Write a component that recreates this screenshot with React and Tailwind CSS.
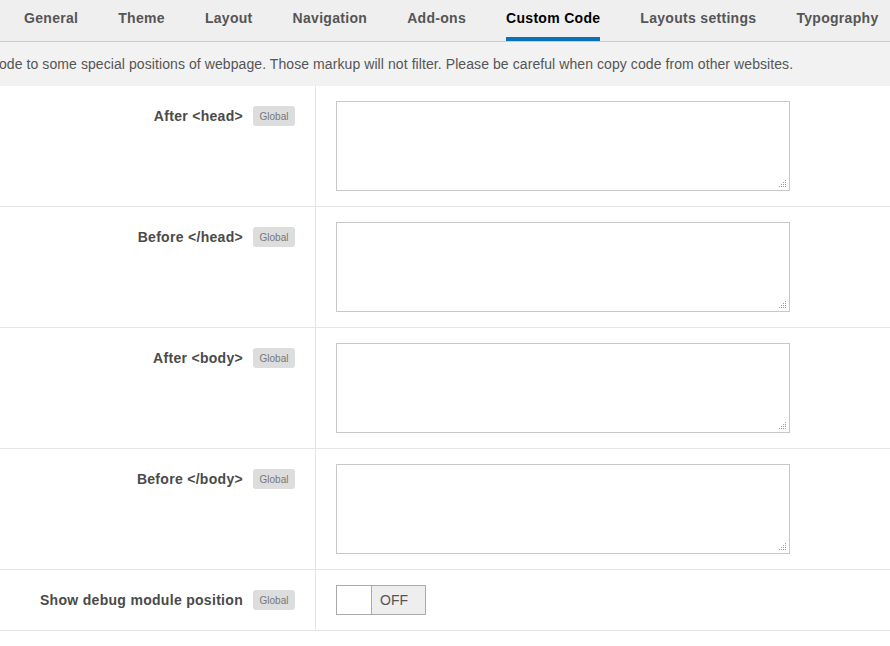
import { useState } from 'react'

const TABS = ['General', 'Theme', 'Layout', 'Navigation', 'Add-ons', 'Custom Code', 'Layouts settings', 'Typography']

const ROWS = ['After <head>', 'Before </head>', 'After <body>', 'Before </body>']

// petit grip en pointillés dans le coin du textarea
function Grip() {
  return (
    <svg width="8" height="8" viewBox="0 0 8 8" className="absolute right-[3px] bottom-[3px] pointer-events-none">
      <g fill="#9a9a9a">
        <rect x="6" y="0" width="1" height="1" />
        <rect x="4" y="2" width="1" height="1" />
        <rect x="6" y="2" width="1" height="1" />
        <rect x="2" y="4" width="1" height="1" />
        <rect x="4" y="4" width="1" height="1" />
        <rect x="6" y="4" width="1" height="1" />
        <rect x="0" y="6" width="1" height="1" />
        <rect x="2" y="6" width="1" height="1" />
        <rect x="4" y="6" width="1" height="1" />
        <rect x="6" y="6" width="1" height="1" />
      </g>
    </svg>
  )
}

function Badge() {
  return (
    <span className="inline-flex items-center justify-center w-[42px] h-5 rounded-[3px] bg-[#dddddd] text-[10px] text-[#777] shrink-0">
      Global
    </span>
  )
}

function Label({ children }) {
  return (
    <div className="w-[316px] shrink-0 border-r border-[#e5e5e5] flex justify-end items-start gap-[10px] pr-5 pt-5">
      <span className="text-[14px] tracking-[0.3px] font-bold text-[#4a4a4a] leading-5">{children}</span>
      <Badge />
    </div>
  )
}

export default function App() {
  const [attivo, setAttivo] = useState('Custom Code')
  const [debug, setDebug] = useState(false)

  return (
    <div className="w-[890px] h-[646px] bg-white overflow-hidden" style={{ fontFamily: '"Liberation Sans", Arial, sans-serif' }}>
      <div className="h-[42px] bg-[#efefef] border-b border-[#cccccc] flex pl-1">
        {TABS.map((t) => (
          <button
            key={t}
            type="button"
            onClick={() => setAttivo(t)}
            className={`relative px-5 pb-1 h-[41px] text-[14px] tracking-[0.3px] font-bold whitespace-nowrap ${
              attivo === t ? 'text-black' : 'text-[#555]'
            }`}
          >
            {t}
            {attivo === t && <span className="absolute left-5 right-5 bottom-0 h-1 bg-[#0a70b8]" />}
          </button>
        ))}
      </div>

      <div className="h-11 bg-[#f2f2f2] flex items-center whitespace-nowrap text-[14px] tracking-[0.08px] text-[#555] -ml-px">
        ode to some special positions of webpage. Those markup will not filter. Please be careful when copy code from other websites.
      </div>

      {ROWS.map((r) => (
        <div key={r} className="flex border-b border-[#e5e5e5]">
          <Label>{r}</Label>
          <div className="pl-5 py-[15px]">
            <div className="relative w-[454px] h-[90px]">
              <textarea className="block w-full h-full border border-[#c8c8c8] bg-white resize-none outline-none p-1 text-[13px]" />
              <Grip />
            </div>
          </div>
        </div>
      ))}

      <div className="flex border-b border-[#e5e5e5]">
        <Label>Show debug module position</Label>
        <div className="pl-5 py-[15px]">
          <button
            type="button"
            onClick={() => setDebug(!debug)}
            className="flex w-[90px] h-[30px] border border-[#aaaaaa] bg-white"
          >
            <span className="w-[35px] h-full border-r border-[#aaaaaa]" />
            <span className="flex-1 h-full bg-[#eeeeee] flex items-center pl-2 text-[14px] text-[#555]">
              {debug ? 'ON' : 'OFF'}
            </span>
          </button>
        </div>
      </div>
    </div>
  )
}
